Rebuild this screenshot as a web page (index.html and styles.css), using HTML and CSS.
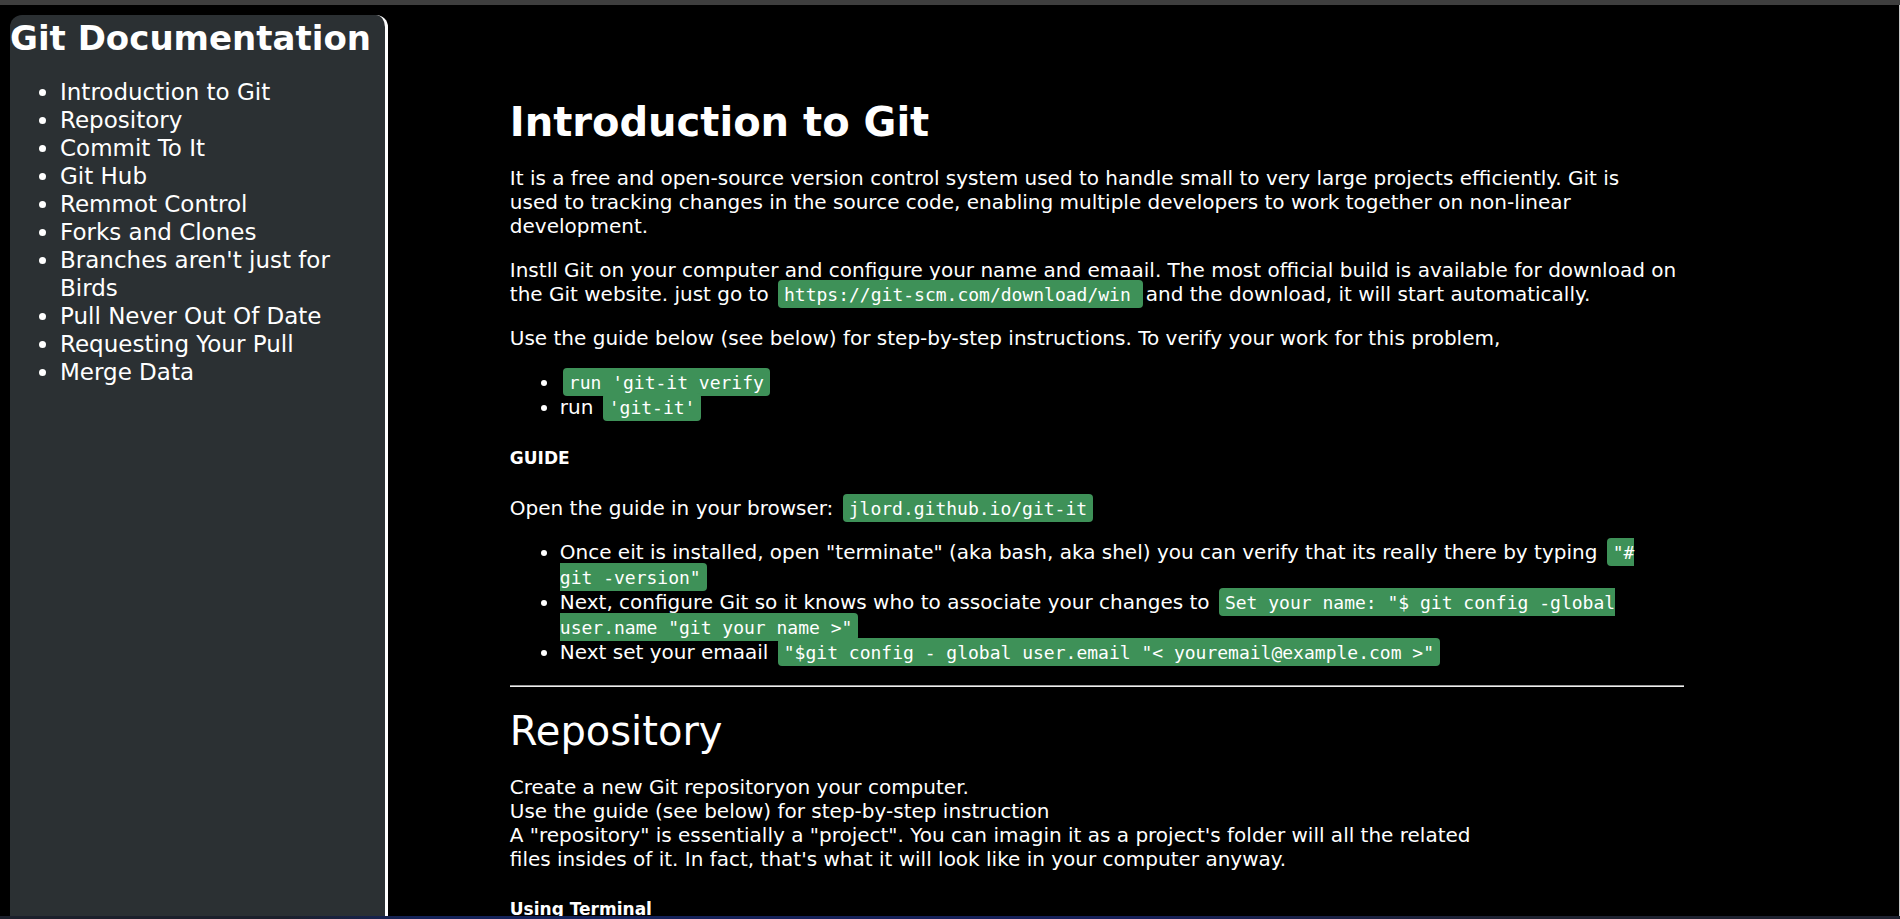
FILE: index.html
```html
<!DOCTYPE html>
<html lang="en">
<head>
<meta charset="utf-8">
<title>Git Documentation</title>
<link rel="stylesheet" href="styles.css">
</head>
<body>
<div class="edge edge-top"></div>
<div class="page">
  <nav class="sidebar" aria-labelledby="doc-title">
    <h1 class="doc-title" id="doc-title">Git Documentation</h1>
    <ul class="nav-list">
      <li><a href="#introduction">Introduction to Git</a></li>
      <li><a href="#repository">Repository</a></li>
      <li><a href="#commit">Commit To It</a></li>
      <li><a href="#github">Git Hub</a></li>
      <li><a href="#remote">Remmot Control</a></li>
      <li><a href="#forks">Forks and Clones</a></li>
      <li><a href="#branches">Branches aren't just for Birds</a></li>
      <li><a href="#pull">Pull Never Out Of Date</a></li>
      <li><a href="#requesting">Requesting Your Pull</a></li>
      <li><a href="#merge">Merge Data</a></li>
    </ul>
  </nav>
  <main class="content">
    <section id="introduction">
      <h2 class="heading heading-bold">Introduction to Git</h2>
      <p class="text">It is a free and open-source version control system used to handle small to very large projects efficiently. Git is<br>used to tracking changes in the source code, enabling multiple developers to work together on non-linear development.</p>
      <p class="text">Instll Git on your computer and configure your name and emaail. The most official build is available for download on the Git website. just go to <a class="code code-link" href="https://git-scm.com/download/win">https://git-scm.com/download/win</a>and the download, it will start automatically.</p>
      <p class="text">Use the guide below (see below) for step-by-step instructions. To verify your work for this problem,</p>
      <ul class="steps">
        <li><code class="code">run 'git-it verify</code></li>
        <li>run <code class="code">'git-it'</code></li>
      </ul>
      <h3 class="subheading">GUIDE</h3>
      <p class="text">Open the guide in your browser: <a class="code" href="https://jlord.github.io/git-it">jlord.github.io/git-it</a></p>
      <ul class="steps">
        <li>Once eit is installed, open "terminate" (aka bash, aka shel) you can verify that its really there by typing <code class="code">"#<br>git -version"</code></li>
        <li>Next, configure Git so it knows who to associate your changes to <code class="code">Set your name: "$ git config -global user.name "git your name &gt;"</code></li>
        <li>Next set your emaail <code class="code">"$git config - global user.email "&lt; youremail@example.com &gt;"</code></li>
      </ul>
    </section>
    <hr class="divider">
    <section id="repository">
      <h2 class="heading">Repository</h2>
      <p class="text">Create a new Git repositoryon your computer.<br>Use the guide (see below) for step-by-step instruction<br>A "repository" is essentially a "project". You can imagin it as a project's folder will all the related<br>files insides of it. In fact, that's what it will look like in your computer anyway.</p>
      <h3 class="subheading">Using Terminal</h3>
    </section>
  </main>
</div>
<div class="edge edge-bottom"></div>
</body>
</html>
```
FILE: styles.css
```css
* {
  box-sizing: border-box;
}

body {
  display: flex;
  flex-direction: column;
  height: 100vh;
  margin: 0;
  overflow: hidden;
  background: #000;
  color: #fff;
  font: 20px/24px Verdana, "DejaVu Sans", sans-serif;
}

.edge {
  flex: none;
}

.edge-top {
  height: 5px;
  background: #3e3e3e;
}

.edge-bottom {
  height: 3px;
  background: linear-gradient(90deg, #1c202c 0%, #1c202c 15%, #14235a 22%, #16205a 60%, #1e2230 80%);
}

.page {
  display: flex;
  flex: 1;
  min-height: 0;
  overflow: hidden;
  padding-left: 10px;
  border-right: 1px solid #c8c8c8;
}

.sidebar {
  flex: none;
  width: 20%;
  margin-top: 10px;
  border-right: 3px solid #fff;
  border-radius: 12px 12px 0 0;
  background: #2b3033;
}

.doc-title {
  margin: 0;
  font-size: 34px;
  line-height: 46px;
  white-space: nowrap;
}

.nav-list {
  margin: 17px 0;
  padding: 0 20px 0 50px;
  font-size: 23px;
  line-height: 28px;
}

.nav-list a {
  color: inherit;
  text-decoration: none;
}

.content {
  flex: 1;
  padding: 93px 215px 0 122px;
}

.heading {
  margin: 0;
  font-size: 40px;
  font-weight: 400;
  line-height: 48px;
}

.heading-bold {
  font-weight: 700;
}

.text {
  margin: 20px 0;
}

.steps {
  margin: 20px 0;
  padding-left: 50px;
  line-height: 25px;
}

.subheading {
  margin: 28px 0;
  font-size: 17px;
  line-height: 20px;
}

.code {
  margin: 0 3px;
  padding: 4px 6px 3px;
  border-radius: 4px;
  background: #3e9158;
  color: #fff;
  font: 18px/20px "DejaVu Sans Mono", monospace;
  text-decoration: none;
}

.code-link {
  padding-right: 12px;
}

.divider {
  height: 2px;
  margin: 19px 0 20px;
  border: 0;
  border-top: 1px solid #9a9a9a;
  background: #eee;
}
```
